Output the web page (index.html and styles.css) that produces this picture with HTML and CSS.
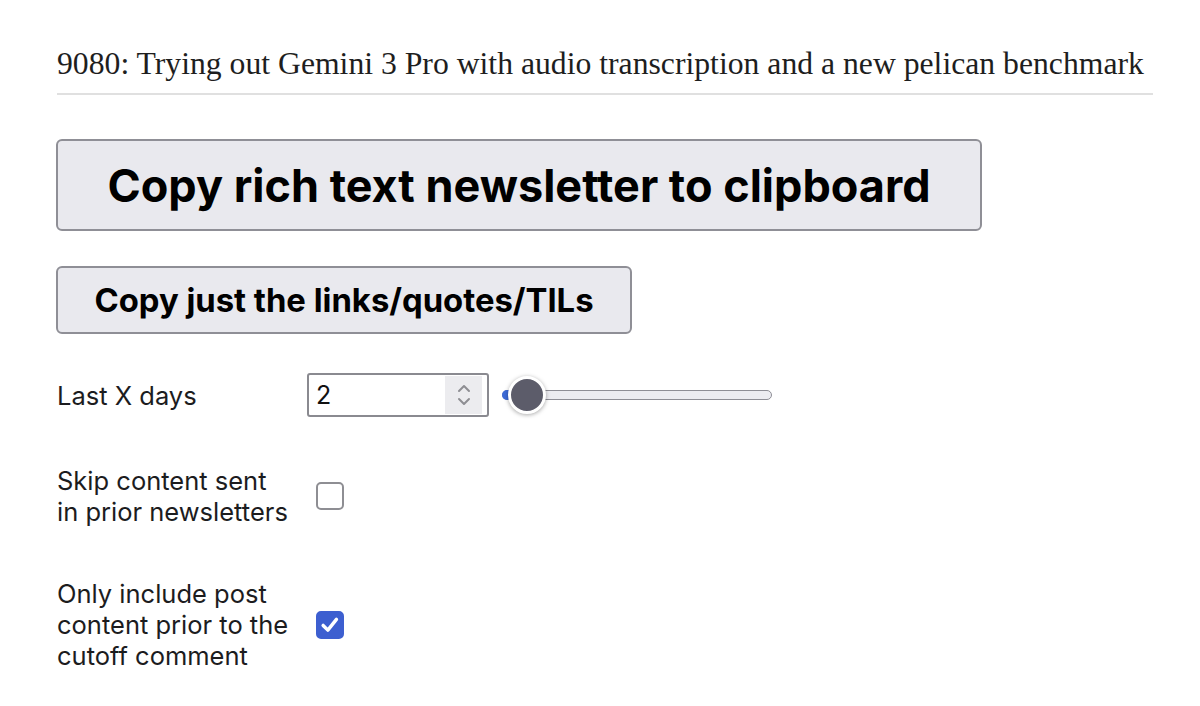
FILE: index.html
```html
<!DOCTYPE html>
<html lang="en">
<head>
<meta charset="utf-8">
<title>Newsletter</title>
<link rel="stylesheet" href="styles.css">
</head>
<body>
<div class="page">
  <h1 class="title">9080: Trying out Gemini 3 Pro with audio transcription and a new pelican benchmark</h1>
  <div class="actions">
    <button class="btn btn-lg" type="button">Copy rich text newsletter to clipboard</button>
    <button class="btn btn-md" type="button">Copy just the links/quotes/TILs</button>
  </div>
  <div class="form">
    <div class="row row-days">
      <label class="label" for="days">Last X days</label>
      <div class="controls">
        <div class="number">
          <input id="days" class="number-input" type="number" value="2" min="1">
          <span class="spin">
            <svg width="16" height="28" viewBox="0 0 16 28" fill="none" stroke="#8e8e93" stroke-width="2" stroke-linecap="round" stroke-linejoin="round"><path d="M3 10 L8 5 L13 10"/><path d="M3 18 L8 23 L13 18"/></svg>
          </span>
        </div>
        <div class="slider">
          <span class="slider-fill"></span>
          <span class="slider-thumb"></span>
        </div>
      </div>
    </div>
    <div class="row">
      <label class="label" for="skip">Skip content sent in prior newsletters</label>
      <input id="skip" class="check" type="checkbox">
    </div>
    <div class="row">
      <label class="label" for="cutoff">Only include post content prior to the cutoff comment</label>
      <input id="cutoff" class="check" type="checkbox" checked>
    </div>
  </div>
</div>
</body>
</html>
```
FILE: styles.css
```css
* { box-sizing: border-box; }
html, body { margin: 0; padding: 0; background: #ffffff; }
body { font-family: Inter, "Noto Sans", "Liberation Sans", sans-serif; color: #1c1c1e; }

.page {
  padding: 42px 47px 0 57px;
}

.title {
  margin: 0;
  font-family: "Liberation Serif", "DejaVu Serif", serif;
  font-weight: 400;
  font-size: 31.7px;
  line-height: 44px;
  color: #1e1e1e;
  padding-bottom: 7px;
  border-bottom: 2px solid #e0e0e0;
}

.actions {
  display: flex;
  flex-direction: column;
  align-items: flex-start;
  gap: 35px;
  margin-top: 44px;
  margin-left: -1px;
}

.btn {
  font-family: Inter, "Liberation Sans", sans-serif;
  font-weight: 700;
  color: #000;
  background: #e9e9ee;
  border: 2px solid #8f8f96;
  border-radius: 6px;
  cursor: pointer;
  padding: 0;
}
.btn-lg {
  width: 926px;
  height: 92px;
  font-size: 45px;
  letter-spacing: 0;
}
.btn-md {
  width: 576px;
  height: 68px;
  font-size: 32.8px;
  letter-spacing: 0;
}

.form {
  display: flex;
  flex-direction: column;
  margin-top: 39px;
}
.row + .row { margin-top: 48px; }
.row + .row + .row { margin-top: 51px; }

.row {
  display: grid;
  grid-template-columns: 250px auto;
  align-items: center;
  justify-content: start;
}

.label {
  font-size: 25.5px;
  line-height: 31px;
  color: #1c1c1e;
  padding-right: 14px;
}

.controls {
  display: flex;
  align-items: center;
  gap: 13px;
}

.number {
  display: flex;
  align-items: center;
  width: 182px;
  height: 44px;
  border: 2px solid #8a8a90;
  border-radius: 3px;
  padding: 1px 5px 1px 2px;
  background: #fff;
}
.number-input {
  flex: 1;
  min-width: 0;
  border: none;
  outline: none;
  font-family: Inter, "Liberation Sans", sans-serif;
  font-size: 25px;
  color: #111;
  padding: 0 0 0 5px;
  background: transparent;
  -moz-appearance: textfield;
}
.number-input::-webkit-outer-spin-button,
.number-input::-webkit-inner-spin-button {
  -webkit-appearance: none;
  margin: 0;
}
.spin {
  display: flex;
  align-items: center;
  justify-content: center;
  width: 37px;
  height: 38px;
  background: #ececef;
}

.slider {
  position: relative;
  width: 270px;
  height: 10px;
  background: #ececf1;
  border: 1.5px solid #8e8e96;
  border-radius: 5px;
}
.slider-fill {
  position: absolute;
  left: -1px;
  top: -1px;
  width: 14px;
  height: 10px;
  background: #3d6bd8;
  border-radius: 5px 0 0 5px;
}
.slider-thumb {
  position: absolute;
  left: 5px;
  top: 50%;
  width: 38px;
  height: 38px;
  margin-top: -19px;
  border-radius: 50%;
  background: #5c5c6a;
  border: 3px solid #ffffff;
  box-shadow: 0 1px 4px rgba(0,0,0,0.35);
}

.check {
  -webkit-appearance: none;
  appearance: none;
  width: 28px;
  height: 28px;
  margin: 0 0 0 9px;
  border: 2px solid #8e8e93;
  border-radius: 5px;
  background: #fff;
}
.check:checked {
  border-color: #3d5fd0;
  background-color: #3d5fd0;
  background-image: url("data:image/svg+xml,%3Csvg xmlns='http://www.w3.org/2000/svg' viewBox='0 0 28 28'%3E%3Cpath d='M6 14.5 L11.5 20 L21.5 7.5' fill='none' stroke='white' stroke-width='4' stroke-linecap='round' stroke-linejoin='round'/%3E%3C/svg%3E");
  background-size: 100% 100%;
}
```
